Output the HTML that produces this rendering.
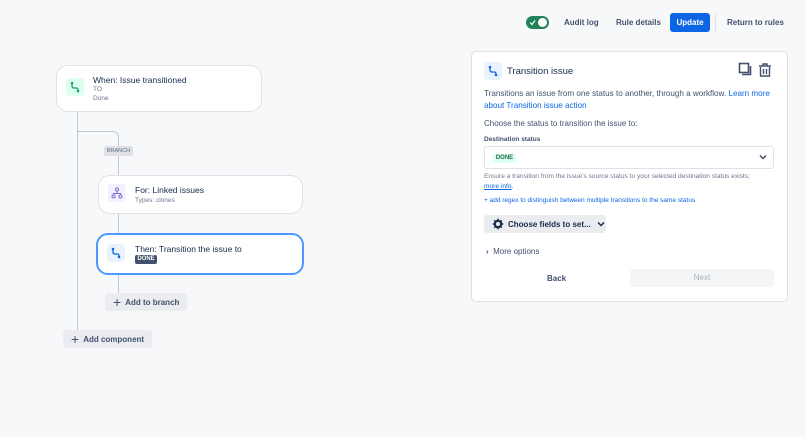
<!DOCTYPE html><html><head><style>
*{box-sizing:border-box;margin:0;padding:0}
body{width:806px;height:437px;background:#f7f8f9;font-family:"Liberation Sans",sans-serif;color:#172b4d;position:relative;overflow:hidden}
.a{position:absolute}
.card{position:absolute;background:#fff;border:1px solid #dfe1e6;border-radius:12px}
.ic{position:absolute;width:18px;height:18px;border-radius:4px}
.t{font-size:8.5px;color:#172b4d;white-space:nowrap}
.s{font-size:6.5px;color:#6b778c;white-space:nowrap}
.btn{position:absolute;background:#ebecf0;border-radius:3px;font-size:8px;font-weight:bold;color:#42526e;display:flex;align-items:center;white-space:nowrap}
</style></head><body>
<div class="a" style="left:77px;top:112px;width:1px;height:220px;background:#c1c7d0"></div>
<div class="a" style="left:77px;top:131px;width:42px;height:20px;border-top:1px solid #c1c7d0;border-right:1px solid #c1c7d0;border-top-right-radius:6px"></div>
<div class="a" style="left:118px;top:150px;width:1px;height:145px;background:#c1c7d0"></div>
<div class="a" style="left:104px;top:146px;width:29px;height:10px;background:#dfe1e6;border-radius:2px;font-size:5.5px;color:#5e6c84;text-align:center;line-height:10px">BRANCH</div>

<div class="card" style="left:56px;top:65px;width:206px;height:47px"></div>
<div class="ic" style="left:66px;top:78px;background:#dcfff1"><svg width="18" height="18"><path d="M6 5v3q0 2 2 2h2q2 0 2 2v1" stroke="#22a06b" stroke-width="1.3" fill="none"/><circle cx="6" cy="5" r="1.3" fill="#22a06b"/><circle cx="12" cy="13" r="1.3" fill="#22a06b"/></svg></div>
<div class="a t" style="left:93px;top:75px">When: Issue transitioned</div>
<div class="a s" style="left:93px;top:86px">TO</div>
<div class="a s" style="left:93px;top:95px">Done</div>

<div class="card" style="left:98px;top:175px;width:205px;height:39px"></div>
<div class="ic" style="left:108px;top:184px;background:#f3f0ff"><svg width="18" height="18"><circle cx="9" cy="5.5" r="1.6" fill="none" stroke="#8270db" stroke-width="1.1"/><path d="M9 7v2.5M5.5 11V9.5h7V11" stroke="#8270db" stroke-width="1.1" fill="none"/><circle cx="5.5" cy="12.5" r="1.5" fill="none" stroke="#8270db" stroke-width="1.1"/><circle cx="12.5" cy="12.5" r="1.5" fill="none" stroke="#8270db" stroke-width="1.1"/></svg></div>
<div class="a t" style="left:135px;top:185px">For: Linked issues</div>
<div class="a s" style="left:135px;top:197px">Types: clones</div>

<div class="card" style="left:96px;top:233px;width:208px;height:42px;border:2px solid #4c9aff"></div>
<div class="ic" style="left:107px;top:244px;background:#e9f2ff"><svg width="18" height="18"><path d="M6 5v3q0 2 2 2h2q2 0 2 2v1" stroke="#0c66e4" stroke-width="1.3" fill="none"/><circle cx="6" cy="5" r="1.3" fill="#0c66e4"/><circle cx="12" cy="13" r="1.3" fill="#0c66e4"/></svg></div>
<div class="a t" style="left:135px;top:244px">Then: Transition the issue to</div>
<div class="a" style="left:135px;top:255px;width:22px;height:9px;background:#42526e;color:#fff;font-size:6px;font-weight:bold;text-align:center;line-height:9px;border-radius:2px">DONE</div>

<div class="btn" style="left:105px;top:293px;width:82px;height:18px;padding-left:8px"><span style="font-size:14px;font-weight:normal;margin-right:4px;color:#42526e">+</span>Add to branch</div>
<div class="btn" style="left:63px;top:330px;width:89px;height:18px;padding-left:8px"><span style="font-size:14px;font-weight:normal;margin-right:4px;color:#42526e">+</span>Add component</div>

<div class="a" style="left:526px;top:16px;width:23px;height:13px;background:#1f845a;border-radius:7px"><div class="a" style="right:2px;top:2px;width:9px;height:9px;border-radius:50%;background:#fff"></div><svg class="a" style="left:3px;top:3px" width="7" height="7"><path d="M1 3.5l2 2 3-4" stroke="#fff" stroke-width="1.2" fill="none"/></svg></div>
<div class="a" style="left:564px;top:18px;font-size:8px;font-weight:bold;color:#42526e">Audit log</div>
<div class="a" style="left:616px;top:18px;font-size:8px;font-weight:bold;color:#42526e">Rule details</div>
<div class="a" style="left:670px;top:13px;width:40px;height:19px;background:#0c66e4;border-radius:3px;color:#fff;font-size:8px;font-weight:bold;text-align:center;line-height:19px">Update</div>
<div class="a" style="left:715px;top:13px;width:1px;height:19px;background:#dfe1e6"></div>
<div class="a" style="left:727px;top:18px;font-size:8px;font-weight:bold;color:#42526e">Return to rules</div>

<div class="a" style="left:471px;top:51px;width:317px;height:251px;background:#fff;border:1px solid #dfe1e6;border-radius:5px"></div>
<div class="ic" style="left:484px;top:62px;background:#e9f2ff"><svg width="18" height="18"><path d="M6 5v3q0 2 2 2h2q2 0 2 2v1" stroke="#0c66e4" stroke-width="1.3" fill="none"/><circle cx="6" cy="5" r="1.3" fill="#0c66e4"/><circle cx="12" cy="13" r="1.3" fill="#0c66e4"/></svg></div>
<div class="a" style="left:507px;top:66px;font-size:9.5px;color:#172b4d">Transition issue</div>
<svg class="a" style="left:738px;top:62px" width="36" height="16"><rect x="1.5" y="1.5" width="9" height="9" fill="none" stroke="#42526e" stroke-width="1.6"/><path d="M4 12.5h8.5V4" stroke="#42526e" stroke-width="1.6" fill="none"/><path d="M21 4h12M25 4V2h4v2M22.5 5v9h9V5M25.5 7v5M28.5 7v5" stroke="#42526e" stroke-width="1.4" fill="none"/></svg>
<div class="a" style="left:484px;top:88px;font-size:8.1px;color:#42526e;line-height:11.5px;width:292px">Transitions an issue from one status to another, through a workflow. <span style="color:#0c66e4">Learn more about Transition issue action</span></div>
<div class="a" style="left:484px;top:119px;font-size:8px;color:#42526e">Choose the status to transition the issue to:</div>
<div class="a" style="left:484px;top:136px;font-size:6.5px;font-weight:bold;color:#42526e">Destination status</div>
<div class="a" style="left:484px;top:146px;width:290px;height:23px;border:1px solid #dfe1e6;border-radius:3px;background:#fff"></div>
<div class="a" style="left:493px;top:154px;width:23px;height:9px;background:#dcfff1;color:#216e4e;font-size:6px;font-weight:bold;text-align:center;line-height:9px;border-radius:2px">DONE</div>
<svg class="a" style="left:759px;top:154px" width="8" height="6"><path d="M1 1.5l3 3 3-3" stroke="#42526e" stroke-width="1.5" fill="none"/></svg>
<div class="a" style="left:484px;top:172px;font-size:6.6px;color:#6b778c;line-height:9.5px;width:290px">Ensure a transition from the issue's source status to your selected destination status exists;<br><u style="color:#0c66e4">more info</u>.</div>
<div class="a" style="left:484px;top:197px;font-size:6.5px;color:#0c66e4">+ add regex to distinguish between multiple transitions to the same status</div>
<div class="btn" style="left:484px;top:215px;width:122px;height:18px;padding-left:8px;color:#172b4d">
<svg width="12" height="12" style="margin-right:4px"><circle cx="6" cy="6" r="3.2" fill="none" stroke="#172b4d" stroke-width="2.2"/><path d="M6 0.8v2M6 9.2v2M0.8 6h2M9.2 6h2M2.3 2.3l1.4 1.4M8.3 8.3l1.4 1.4M2.3 9.7l1.4-1.4M8.3 3.7l1.4-1.4" stroke="#172b4d" stroke-width="1.6"/></svg>Choose fields to set...<svg width="8" height="6" style="margin-left:6px"><path d="M1 1.5l3 3 3-3" stroke="#172b4d" stroke-width="1.5" fill="none"/></svg></div>
<div class="a" style="left:486px;top:247px;font-size:8px;color:#42526e"><b style="font-size:8px">›</b>&nbsp; More options</div>
<div class="a" style="left:547px;top:274px;font-size:8px;font-weight:bold;color:#42526e">Back</div>
<div class="a" style="left:630px;top:269px;width:144px;height:18px;background:#f4f5f7;border-radius:3px;font-size:8px;color:#a5adba;text-align:center;line-height:18px">Next</div>
</body></html>
